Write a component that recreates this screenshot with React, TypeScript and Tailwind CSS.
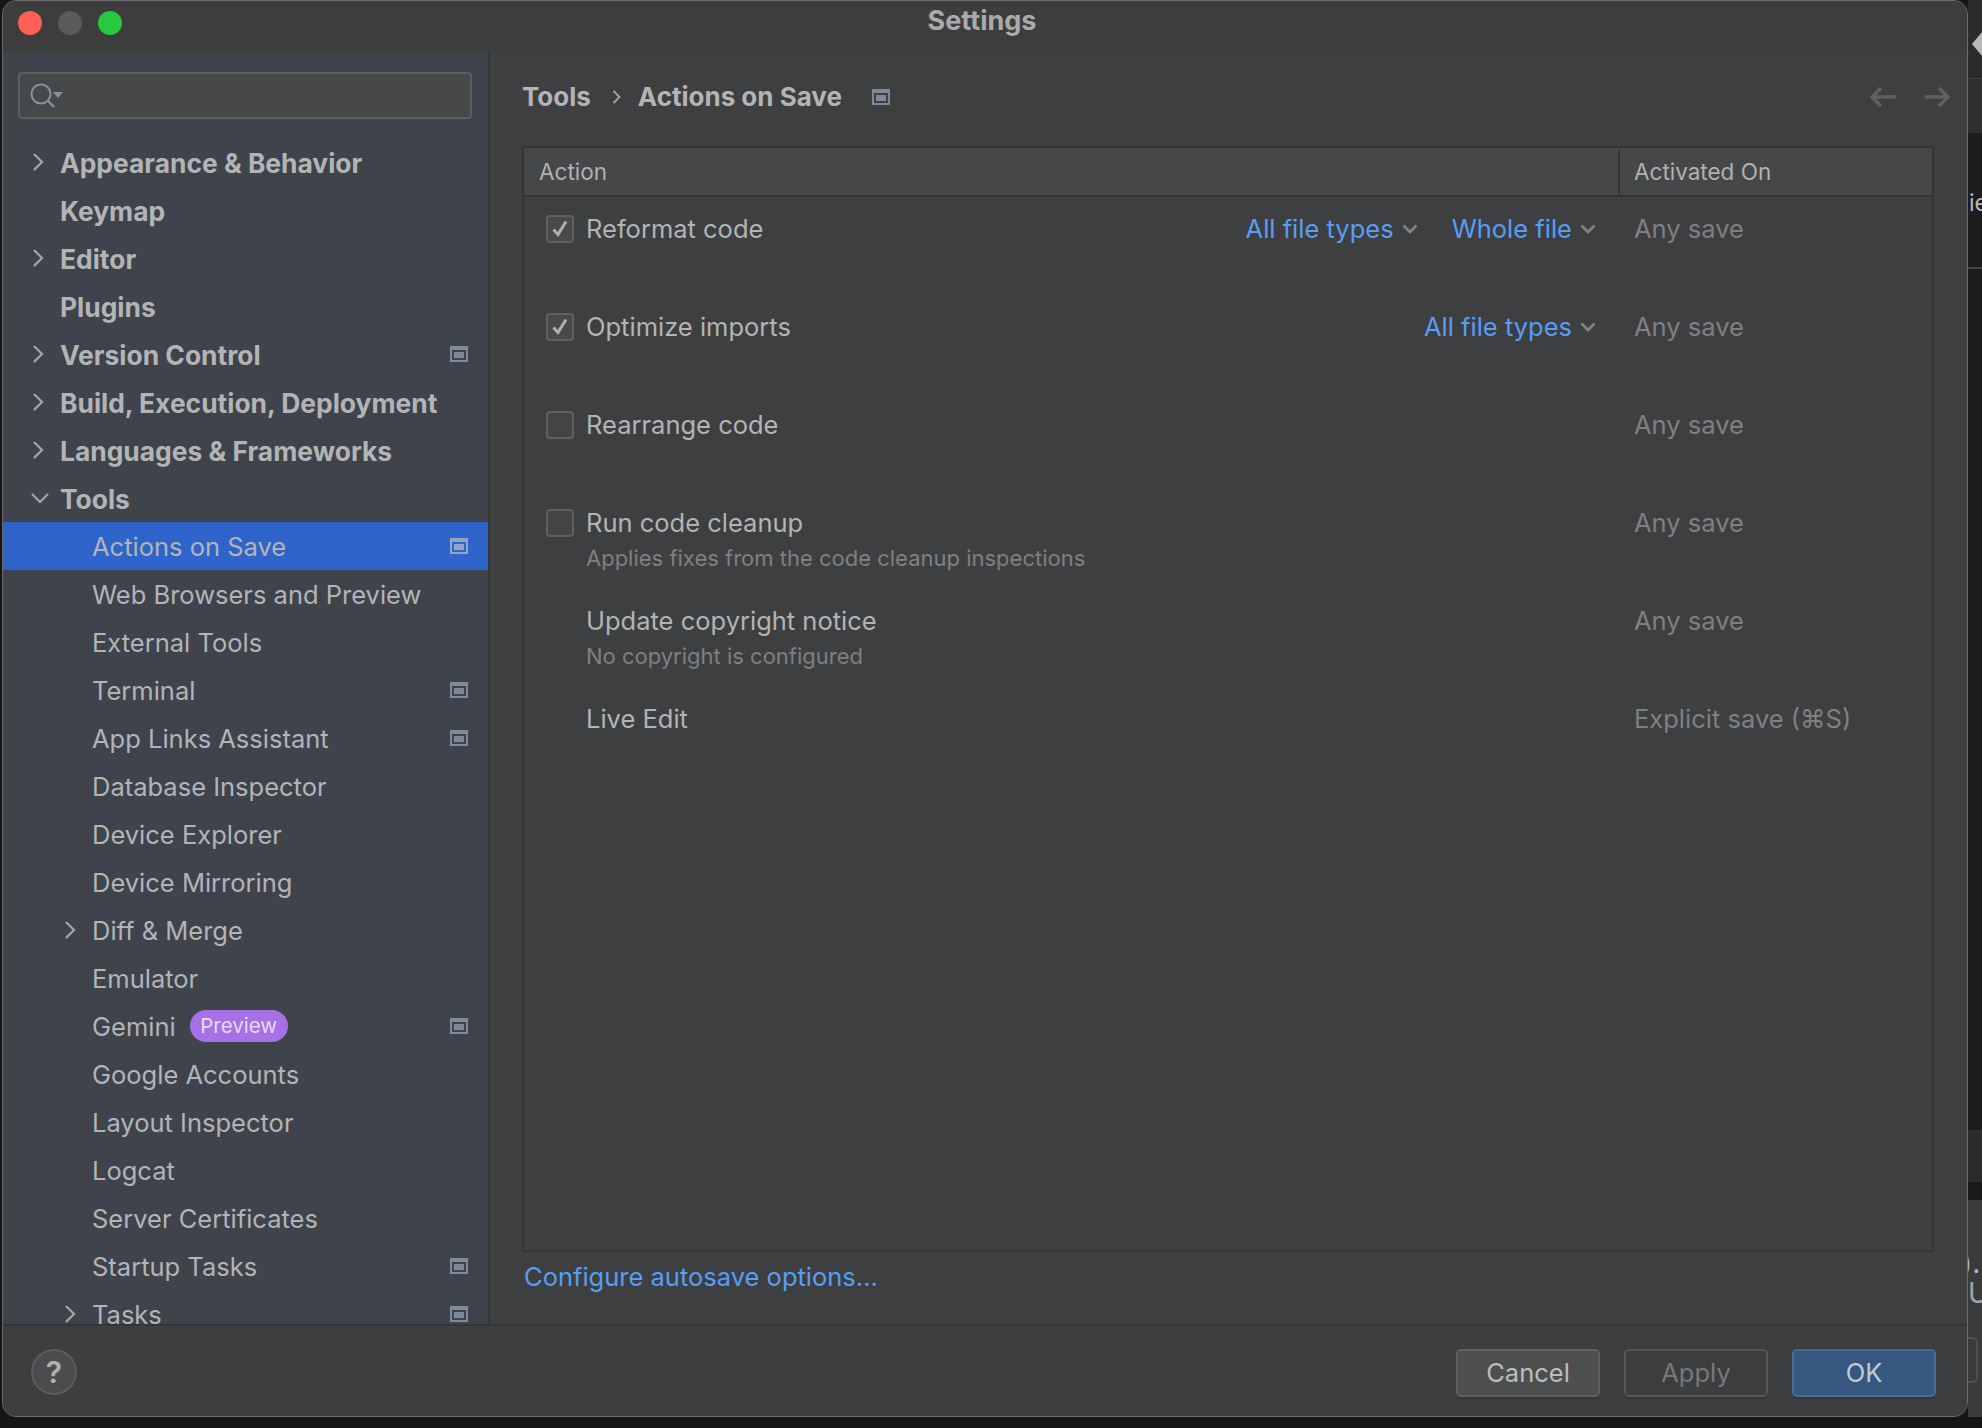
import React from "react";

const font = { fontFamily: "Inter, 'Noto Sans', sans-serif" };

type NavItem = {
  label: string;
  level: 0 | 1;
  arrow?: "right" | "down";
  page?: boolean;
  selected?: boolean;
  badge?: string;
};

const navItems: NavItem[] = [
  { label: "Appearance & Behavior", level: 0, arrow: "right" },
  { label: "Keymap", level: 0 },
  { label: "Editor", level: 0, arrow: "right" },
  { label: "Plugins", level: 0 },
  { label: "Version Control", level: 0, arrow: "right", page: true },
  { label: "Build, Execution, Deployment", level: 0, arrow: "right" },
  { label: "Languages & Frameworks", level: 0, arrow: "right" },
  { label: "Tools", level: 0, arrow: "down" },
  { label: "Actions on Save", level: 1, page: true, selected: true },
  { label: "Web Browsers and Preview", level: 1 },
  { label: "External Tools", level: 1 },
  { label: "Terminal", level: 1, page: true },
  { label: "App Links Assistant", level: 1, page: true },
  { label: "Database Inspector", level: 1 },
  { label: "Device Explorer", level: 1 },
  { label: "Device Mirroring", level: 1 },
  { label: "Diff & Merge", level: 1, arrow: "right" },
  { label: "Emulator", level: 1 },
  { label: "Gemini", level: 1, page: true, badge: "Preview" },
  { label: "Google Accounts", level: 1 },
  { label: "Layout Inspector", level: 1 },
  { label: "Logcat", level: 1 },
  { label: "Server Certificates", level: 1 },
  { label: "Startup Tasks", level: 1, page: true },
  { label: "Tasks", level: 1, arrow: "right", page: true },
];

type ActionRow = {
  label: string;
  sub?: string;
  checkbox?: "on" | "off";
  links?: string[];
  activated: string;
};

const actionRows: ActionRow[] = [
  { label: "Reformat code", checkbox: "on", links: ["All file types", "Whole file"], activated: "Any save" },
  { label: "Optimize imports", checkbox: "on", links: ["All file types"], activated: "Any save" },
  { label: "Rearrange code", checkbox: "off", activated: "Any save" },
  { label: "Run code cleanup", sub: "Applies fixes from the code cleanup inspections", checkbox: "off", activated: "Any save" },
  { label: "Update copyright notice", sub: "No copyright is configured", activated: "Any save" },
  { label: "Live Edit", activated: "Explicit save (⌘S)" },
];

function PageIcon({ selected }: { selected?: boolean }) {
  return (
    <svg width="18" height="16" viewBox="0 0 18 16" className={selected ? "shrink-0 text-[#93a5c4]" : "shrink-0 text-[#7d8a9a]"}>
      <rect x="1" y="1" width="16" height="14" fill="none" stroke="currentColor" strokeWidth="2" />
      <rect x="1" y="1" width="16" height="3" fill="currentColor" />
      <rect x="4" y="6" width="10" height="6" fill="currentColor" />
    </svg>
  );
}

function NavRow({ item }: { item: NavItem }) {
  return (
    <div
      className={`flex h-12 shrink-0 items-center pr-5 ${item.level === 0 ? "pl-[29px]" : "pl-[61px]"} ${
        item.selected ? "bg-[#2f65ca]" : ""
      }`}
    >
      <span className="flex w-[28px] shrink-0 items-center">
        {item.arrow === "right" && (
          <svg width="12" height="20" viewBox="0 0 12 20" fill="none" stroke="#a3a5a8" strokeWidth="2.2">
            <path d="M2 2l8 8-8 8" />
          </svg>
        )}
        {item.arrow === "down" && (
          <svg width="18" height="11" viewBox="0 0 18 11" fill="none" stroke="#a3a5a8" strokeWidth="2.2" className="-ml-[1px]">
            <path d="M1 1l8 8 8-8" />
          </svg>
        )}
      </span>
      <span
        className={`pt-[2px] leading-[34px] text-[#b3b4b6] whitespace-nowrap ${
          item.level === 0 ? "text-[26.4px] font-bold" : "text-[25.5px] font-normal"
        }`}
      >
        {item.label}
      </span>
      {item.badge && (
        <span className="ml-[14px] flex h-8 w-[98px] items-center justify-center rounded-full bg-[#a771e6] text-[20.5px] text-[#e6d9f7]">
          {item.badge}
        </span>
      )}
      <span className="flex-1" />
      {item.page && <PageIcon selected={item.selected} />}
    </div>
  );
}

function Checkbox({ on }: { on: boolean }) {
  return (
    <span
      className={`flex h-7 w-7 shrink-0 items-center justify-center rounded-[4px] border-2 border-[#5e6062] ${
        on ? "bg-[#47494b]" : "bg-[#434446]"
      }`}
    >
      {on && (
        <svg width="18" height="18" viewBox="0 0 18 18" fill="none" stroke="#aeafb0" strokeWidth="3">
          <path d="M2.5 9.5l4.5 5 8-13" />
        </svg>
      )}
    </span>
  );
}

function LinkDropdown({ label }: { label: string }) {
  return (
    <span className="flex items-center">
      <span className="text-[25.5px] leading-[34px] text-[#589df6] whitespace-nowrap">{label}</span>
      <svg width="16" height="10" viewBox="0 0 16 10" fill="none" stroke="#808284" strokeWidth="2.8" className="ml-[8px]">
        <path d="M1.5 1.5L8 8l6.5-6.5" />
      </svg>
    </span>
  );
}

function FooterButton({ label, kind }: { label: string; kind: "normal" | "disabled" | "primary" }) {
  const look =
    kind === "primary"
      ? "bg-[#365880] border-[#466d94] text-[#c4cbd3]"
      : kind === "disabled"
        ? "bg-[#3c3d3e] border-[#555658] text-[#77787a]"
        : "bg-[#4c4e50] border-[#5e6062] text-[#bcbdbe]";
  return (
    <div className={`flex h-12 w-[144px] items-center justify-center rounded-[5px] border-2 text-[25.5px] shadow-[0_2px_0_#353637] ${look}`}>
      {label}
    </div>
  );
}

export default function App() {
  return (
    <div style={font} className="flex h-[1428px] w-[1982px] flex-col overflow-hidden bg-[#161616]">
      <div className="flex h-[1417px] shrink-0 pl-[2px]">
        {/* Settings window */}
        <div className="flex w-[1966px] shrink-0 flex-col overflow-hidden rounded-[14px] border border-[#6a6b6c] bg-[#3e3f41]">
          <div className="grid h-[51px] shrink-0 grid-cols-[1fr_auto_1fr] items-center bg-[#3d3d3e] pb-[8px]">
            <div className="flex items-center gap-4 pl-[15px]">
              <span className="h-6 w-6 rounded-full bg-[#ff5f57]" />
              <span className="h-6 w-6 rounded-full bg-[#5a5b5d]" />
              <span className="h-6 w-6 rounded-full bg-[#28c840]" />
            </div>
            <div className="mb-[3px] pr-[6px] text-[27px] leading-[34px] font-bold text-[#a9aaab]">Settings</div>
            <div />
          </div>

          <div className="flex h-[1272px] shrink-0">
            {/* Sidebar */}
            <div className="flex w-[487px] shrink-0 flex-col overflow-hidden border-r-2 border-[#343536] bg-[#3f434b]">
              <div className="mx-[15px] mt-[20px] mb-[19px] flex h-[47px] w-[454px] shrink-0 items-center rounded-[4px] border-2 border-[#5b5e62] bg-[#474849] pl-[10px]">
                <svg width="34" height="26" viewBox="0 0 34 26" fill="none">
                  <circle cx="11" cy="11" r="9.5" stroke="#87929f" strokeWidth="2" />
                  <path d="M18 18l6 6" stroke="#87929f" strokeWidth="2.4" />
                  <path d="M23 9h10l-5 6z" fill="#87929f" />
                </svg>
              </div>
              {navItems.map((item) => (
                <NavRow key={item.label} item={item} />
              ))}
            </div>

            {/* Content */}
            <div className="flex min-w-0 flex-1 flex-col pl-[32px] pr-[33px]">
              <div className="flex h-[94px] shrink-0 items-center pb-[5px]">
                <span className="text-[26px] font-bold text-[#b3b4b5]">Tools</span>
                <svg width="9" height="16" viewBox="0 0 9 16" fill="none" stroke="#a3a5a8" strokeWidth="1.8" className="ml-[21px] mr-[17px]">
                  <path d="M1.5 2l6 6-6 6" />
                </svg>
                <span className="text-[26px] font-bold text-[#b3b4b5]">Actions on Save</span>
                <span className="ml-[30px] flex">
                  <PageIcon />
                </span>
                <span className="flex-1" />
                <svg width="28" height="22" viewBox="0 0 28 22" fill="none" stroke="#5f6062" strokeWidth="3.4" className="mr-[28px]">
                  <path d="M27 11H3M12 2l-9 9 9 9" />
                </svg>
                <svg width="26" height="22" viewBox="0 0 26 22" fill="none" stroke="#5f6062" strokeWidth="3.4" className="mr-[-17px]">
                  <path d="M0 11h23M14 2l9 9-9 9" />
                </svg>
              </div>

              <div className="flex h-[1106px] shrink-0 flex-col border-2 border-[#343536]">
                <div className="flex h-[49px] shrink-0 items-center border-b-2 border-[#343536] bg-[#464749] text-[22.5px] text-[#b0b1b2]">
                  <div className="flex-1 pl-[15px]">Action</div>
                  <div className="h-[44px] w-[314px] border-l-2 border-[#343536] pl-[14px] leading-[44px]">Activated On</div>
                </div>
                {actionRows.map((row) => (
                  <div key={row.label} className="flex h-[98px] shrink-0 pt-[15px]">
                    <div className="flex min-w-0 flex-1 items-start pl-[22px] pr-[22px]">
                      <span className="flex h-[34px] w-[40px] shrink-0 items-center">
                        {row.checkbox && <Checkbox on={row.checkbox === "on"} />}
                      </span>
                      <div className="flex flex-col">
                        <span className="text-[25.5px] leading-[34px] text-[#b3b4b5] whitespace-nowrap">{row.label}</span>
                        {row.sub && <span className="mt-[1px] text-[22px] leading-[34px] text-[#7f8082] whitespace-nowrap">{row.sub}</span>}
                      </div>
                      <span className="flex-1" />
                      {row.links && (
                        <div className="flex gap-[34px]">
                          {row.links.map((link) => (
                            <LinkDropdown key={link} label={link} />
                          ))}
                        </div>
                      )}
                    </div>
                    <div className="w-[314px] pl-[16px] text-[25.5px] leading-[34px] text-[#7f8082] whitespace-nowrap">{row.activated}</div>
                  </div>
                ))}
              </div>

              <div className="mt-[8px] pl-[2px] text-[25.5px] leading-[34px] text-[#589df6]">Configure autosave options...</div>
            </div>
          </div>

          {/* Footer */}
          <div className="flex flex-1 items-start justify-between border-t-2 border-[#343536] bg-[#3d3e40] pt-[23px] pl-[28px] pr-[31px]">
            <div className="flex h-[46px] w-[46px] items-center justify-center rounded-full border-2 border-[#5a5c5e] bg-[#4a4c4e] text-[30px] font-semibold text-[#b0b1b2]">
              ?
            </div>
            <div className="flex gap-[24px]">
              <FooterButton label="Cancel" kind="normal" />
              <FooterButton label="Apply" kind="disabled" />
              <FooterButton label="OK" kind="primary" />
            </div>
          </div>
        </div>

        {/* Sliver of the IDE behind the dialog */}
        <div className="flex min-w-0 flex-1 flex-col overflow-hidden text-[#b8b9ba]">
          <div className="flex h-[79px] shrink-0 items-center border-b border-[#3c3d3e] bg-[#2a2b2c]">
            <svg width="10" height="24" viewBox="0 0 10 24" className="mt-[10px] ml-[4px]">
              <path d="M10 0v24L0 12z" fill="#b8b9ba" />
            </svg>
          </div>
          <div className="h-[54px] shrink-0 bg-[#2e2f30]" />
          <div className="flex h-[134px] shrink-0 items-center bg-[#1d1d1d] pt-[6px] pl-[1px] text-[23px] whitespace-nowrap">ie</div>
          <div className="h-[863px] shrink-0 border-t-2 border-[#444546] bg-[#1c1c1c]" />
          <div className="h-[52px] shrink-0 bg-[#2b2b2c]" />
          <div className="h-[18px] shrink-0 bg-[#1b1b1b]" />
          <div className="flex flex-1 flex-col bg-[#3a3b3d] pt-[48px] text-[28px] leading-[30px] whitespace-nowrap">
            <span className="-ml-[6px]">).</span>
            <span className="text-[#a2a3a5]">U</span>
            <div className="mt-[29px] h-[46px] w-[10px] rounded-r-[6px] border-y-2 border-r-2 border-[#4e4f51]" />
          </div>
        </div>
      </div>
    </div>
  );
}
